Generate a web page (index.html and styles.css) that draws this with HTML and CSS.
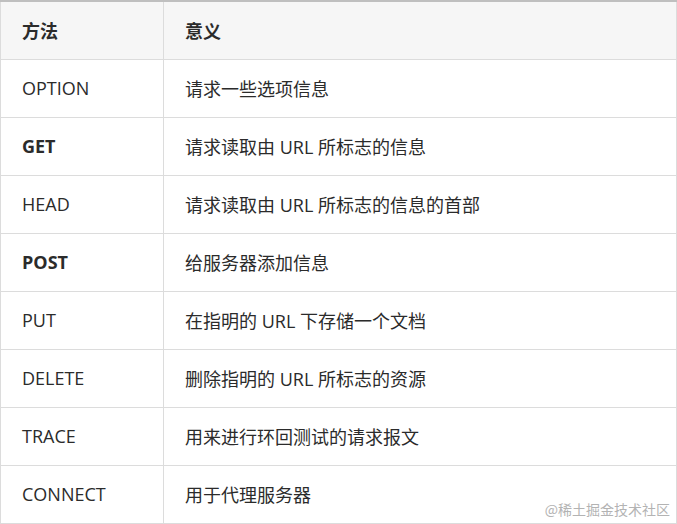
FILE: index.html
```html
<!DOCTYPE html>
<html lang="zh">
<head>
<meta charset="utf-8">
<link rel="stylesheet" href="styles.css">
</head>
<body>
<div class="wrap">
<table class="methods">
  <thead>
    <tr><th class="c1">方法</th><th class="c2">意义</th></tr>
  </thead>
  <tbody>
    <tr><td>OPTION</td><td>请求一些选项信息</td></tr>
    <tr><td><strong>GET</strong></td><td>请求读取由 URL 所标志的信息</td></tr>
    <tr><td>HEAD</td><td>请求读取由 URL 所标志的信息的首部</td></tr>
    <tr><td><strong>POST</strong></td><td>给服务器添加信息</td></tr>
    <tr><td>PUT</td><td>在指明的 URL 下存储一个文档</td></tr>
    <tr><td>DELETE</td><td>删除指明的 URL 所标志的资源</td></tr>
    <tr><td>TRACE</td><td>用来进行环回测试的请求报文</td></tr>
    <tr><td>CONNECT</td><td>用于代理服务器</td></tr>
  </tbody>
</table>
<div class="watermark">@稀土掘金技术社区</div>
</div>
</body>
</html>
```
FILE: styles.css
```css
html, body {
  margin: 0;
  padding: 0;
  background: #fff;
}
.wrap {
  position: relative;
  width: 677px;
  height: 524px;
}
.methods {
  width: 677px;
  border-collapse: collapse;
  table-layout: fixed;
  font-family: "Open Sans", "Noto Sans CJK SC", sans-serif;
  font-size: 18px;
  color: #2b2b2b;
}
.methods th, .methods td {
  border: 1px solid #dcdcdc;
  height: 58px;
  padding: 0 0 0 21px;
  text-align: left;
  vertical-align: middle;
  box-sizing: border-box;
}
.methods thead th {
  background: #f6f6f6;
  border-top: 2px solid #bfbfbf;
  font-weight: bold;
}
.methods th.c1 { width: 163px; }
.methods tr > :first-child { padding-left: 21px; }
.methods tr > :last-child { padding-left: 21px; }
.methods strong { font-weight: bold; }
.watermark {
  position: absolute;
  right: 7px;
  bottom: 5px;
  font-family: "Noto Sans CJK SC", sans-serif;
  font-size: 14px;
  color: #b3b3b3;
}
```
